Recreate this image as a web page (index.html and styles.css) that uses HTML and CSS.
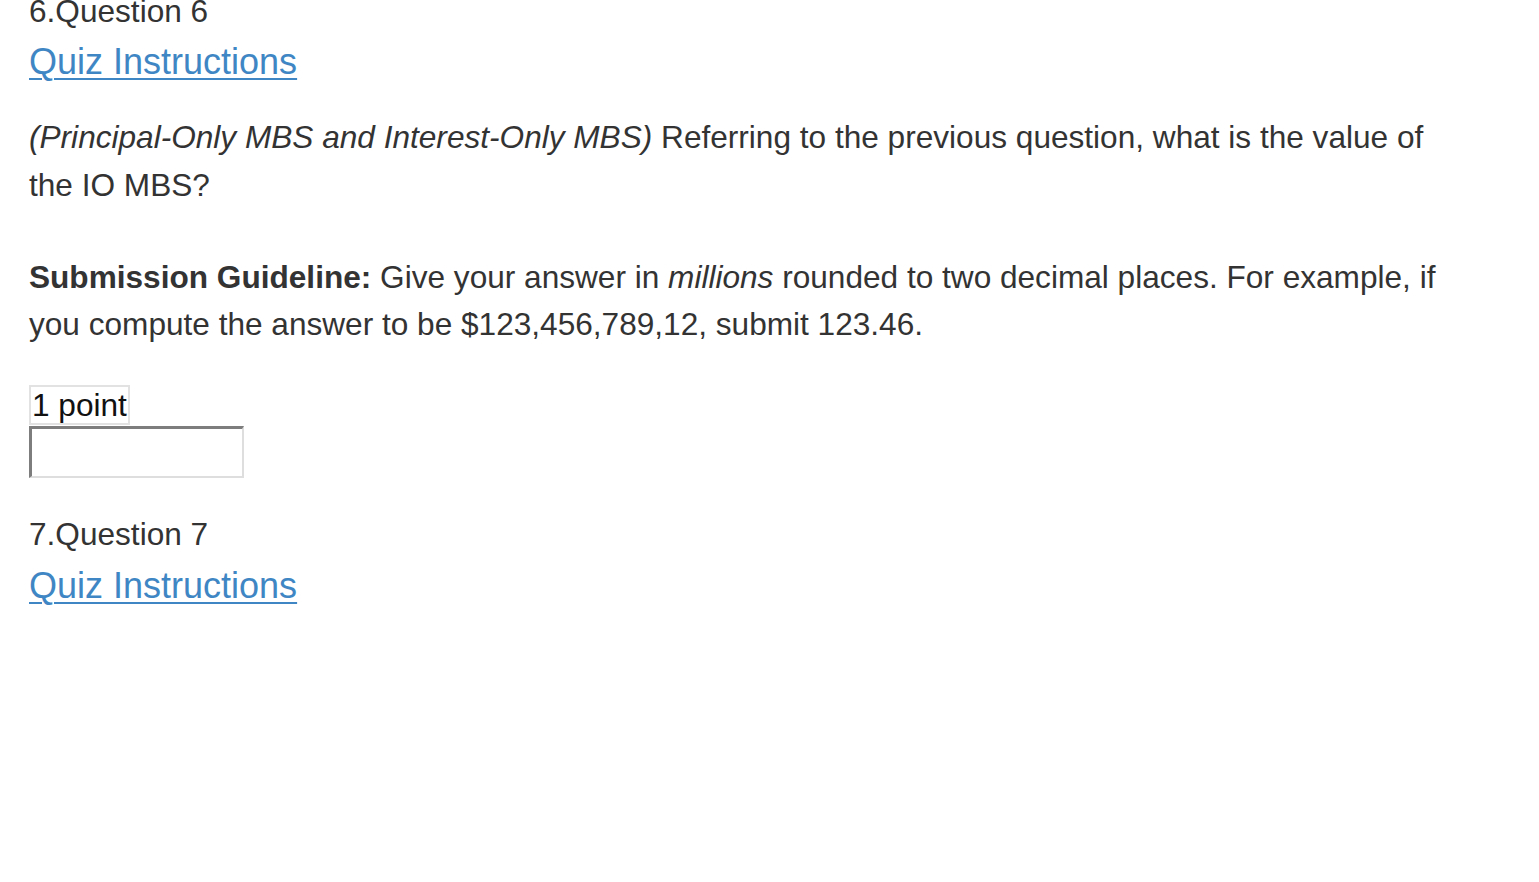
FILE: index.html
```html
<!DOCTYPE html>
<html lang="en">
<head>
<meta charset="utf-8">
<title>Quiz</title>
<link rel="stylesheet" href="styles.css">
</head>
<body>
<main class="quiz">
  <section class="question first">
    <div class="q-title">6.Question 6</div>
    <div class="q-link"><a href="#">Quiz Instructions</a></div>
    <p class="q-text"><em>(Principal-Only MBS and Interest-Only MBS)</em> Referring to the previous question, what is the value of the IO MBS?</p>
    <p class="q-text"><strong>Submission Guideline:</strong> Give your answer in <em>millions</em> rounded to two decimal places. For example, if you compute the answer to be $123,456,789,12, submit 123.46.</p>
    <div class="answer">
      <span class="points">1 point</span>
      <input class="answer-input" type="text" aria-label="Answer">
    </div>
  </section>
  <section class="question">
    <div class="q-title">7.Question 7</div>
    <div class="q-link"><a href="#">Quiz Instructions</a></div>
  </section>
</main>
</body>
</html>
```

FILE: styles.css
```css
html, body {
  margin: 0;
  padding: 0;
  background: #ffffff;
}

body {
  font-family: "Liberation Sans", Arial, sans-serif;
  color: #333333;
  font-size: 31.6px;
  line-height: 47.25px;
}

.quiz {
  width: 1420px;
  padding-left: 29px;
}

.question.first {
  margin-top: -12px;
}

.q-title {
  line-height: 47.25px;
}

.q-link {
  font-size: 36px;
  line-height: 53px;
}

.q-link a {
  color: #3f87c4;
  text-decoration: underline;
  text-underline-offset: 4px;
  text-decoration-thickness: 2px;
}

.q-text {
  margin: 26px 0 0 0;
}

.q-text + .q-text {
  margin-top: 45px;
}

.answer {
  margin-top: 37px;
  display: flex;
  flex-direction: column;
  align-items: flex-start;
}

.points {
  display: inline-block;
  border: 2px solid #e2e2e2;
  color: #111111;
  line-height: 36px;
  padding: 0 1px;
}

.answer-input {
  box-sizing: border-box;
  width: 215px;
  height: 52px;
  margin: 1px 0 0 0;
  padding: 0;
  border-style: solid;
  border-width: 3px 2px 2px 3px;
  border-color: #7d7d7d #dedede #dedede #7d7d7d;
  background: #ffffff;
  font-size: 31.6px;
}

.question + .question {
  margin-top: 33px;
}
```
